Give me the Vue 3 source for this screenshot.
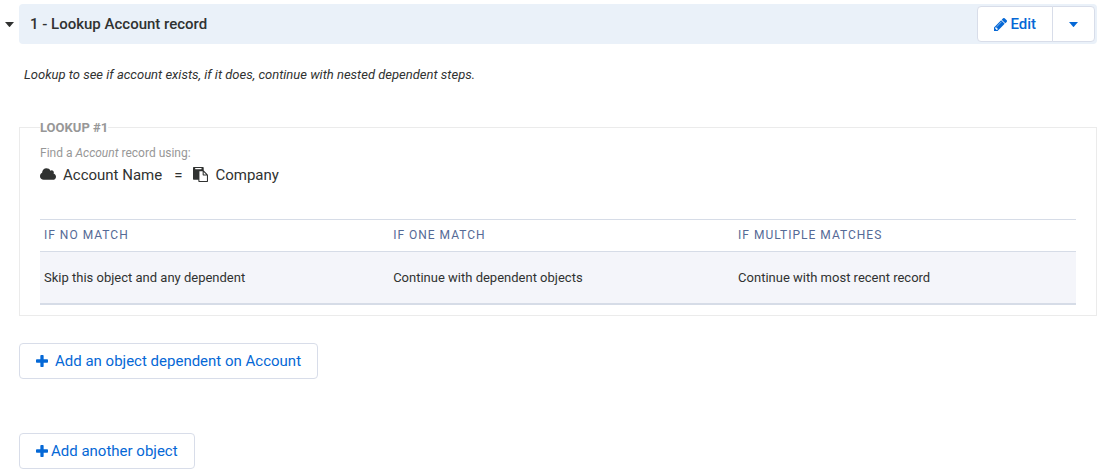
<script setup>
import { ref } from 'vue'

const open = ref(true)

const outcomes = [
  { when: 'If no match', action: 'Skip this object and any dependent' },
  { when: 'If one match', action: 'Continue with dependent objects' },
  { when: 'If multiple matches', action: 'Continue with most recent record' },
]

const plusPath =
  'M1600 736v192q0 40-28 68t-68 28h-416v416q0 40-28 68t-68 28h-192q-40 0-68-28t-28-68v-416h-416q-40 0-68-28t-28-68v-192q0-40 28-68t68-28h416v-416q0-40 28-68t68-28h192q40 0 68 28t28 68v416h416q40 0 68 28t28 68z'
</script>

<template>
  <main class="page">
    <section class="step">
      <header class="step-head">
        <button class="toggle" type="button" aria-label="Toggle step" :aria-expanded="open" @click="open = !open">
          <svg class="caret" viewBox="0 0 9 5" aria-hidden="true"><path d="M0 0h9L4.900 4.700q-.4.4-.8 0z" /></svg>
        </button>
        <div class="bar">
          <h2 class="title">1 - Lookup Account record</h2>
          <div class="group">
            <button class="btn edit" type="button">
              <svg class="pencil" viewBox="128 149 1515 1515" aria-hidden="true">
                <path d="M491 1536l91-91-235-235-91 91v107h128v128h107zm523-928q0-22-22-22-10 0-17 7l-542 542q-7 7-7 17 0 22 22 22 10 0 17-7l542-542q7-7 7-17zm-54-192l416 416-832 832h-416v-416zm683 96q0 53-37 90l-166 166-416-416 166-165q36-38 90-38 53 0 91 38l235 234q37 39 37 91z" />
              </svg>
              <span>Edit</span>
            </button>
            <button class="btn more" type="button" aria-label="More actions">
              <svg class="caret" viewBox="0 0 9 5" aria-hidden="true"><path d="M0 0h9L4.900 4.700q-.4.4-.8 0z" /></svg>
            </button>
          </div>
        </div>
      </header>

      <div v-show="open" class="body">
        <p class="note">Lookup to see if account exists, if it does, continue with nested dependent steps.</p>

        <fieldset class="lookup">
          <legend>LOOKUP #1</legend>
          <p class="hint">Find a <em>Account</em> record using:</p>
          <p class="rule">
            <svg class="cloud" viewBox="64 128 1920 1408" aria-hidden="true">
              <path d="M1984 1152q0 159-112.500 271.500t-271.500 112.500h-1088q-185 0-316.500-131.500t-131.500-316.500q0-132 71-241.500t187-163.500q-2-28-2-43 0-212 150-362t362-150q158 0 286.500 88t187.500 230q70-62 166-62 106 0 181 75t75 181q0 75-41 138 129 30 213 134.500t84 239.500z" />
            </svg>
            <span class="field">Account Name</span>
            <span class="equals">=</span>
            <svg class="paste" viewBox="0 0 1792 1792" aria-hidden="true">
              <path d="M768 1664h896v-640h-416q-40 0-68-28t-28-68v-416h-384v1152zm256-1440v-64q0-13-9.500-22.500t-22.500-9.500h-704q-13 0-22.500 9.500t-9.500 22.500v64q0 13 9.500 22.500t22.500 9.500h704q13 0 22.500-9.500t9.500-22.500zm256 672h299l-299-299v299zm512 128v672q0 40-28 68t-68 28h-960q-40 0-68-28t-28-68v-160h-544q-40 0-68-28t-28-68v-1344q0-40 28-68t68-28h1088q40 0 68 28t28 68v328q21 13 36 28l408 408q28 28 48 76t20 88z" />
            </svg>
            <span class="field">Company</span>
          </p>

          <table class="outcomes">
            <colgroup>
              <col class="col-none" />
              <col class="col-one" />
              <col class="col-many" />
            </colgroup>
            <thead>
              <tr>
                <th v-for="o in outcomes" :key="o.when" scope="col">{{ o.when }}</th>
              </tr>
            </thead>
            <tbody>
              <tr>
                <td v-for="o in outcomes" :key="o.when">{{ o.action }}</td>
              </tr>
            </tbody>
          </table>
        </fieldset>

        <button class="btn add wide" type="button">
          <svg class="plus" viewBox="192 128 1408 1408" aria-hidden="true"><path :d="plusPath" /></svg>
          <span>Add an object dependent on Account</span>
        </button>
      </div>
    </section>

    <button class="btn add outer" type="button">
      <svg class="plus" viewBox="192 128 1408 1408" aria-hidden="true"><path :d="plusPath" /></svg>
      <span>Add another object</span>
    </button>
  </main>
</template>

<style>
body {
  background: #fff;
}
</style>

<style scoped>
.page {
  padding: 4px 17px 4px 0;
  font-family: Roboto, "Liberation Sans", sans-serif;
  font-size: 13px;
  line-height: 20px;
  color: #303231;
}

.page svg {
  display: block;
  flex: none;
  fill: currentColor;
}

.step {
  margin-bottom: 54px;
}

.step-head {
  display: flex;
}

.toggle {
  display: flex;
  align-items: center;
  width: 19px;
  padding: 0 0 0 5px;
  border: 0;
  background: none;
  color: #303231;
}

.caret {
  width: 9px;
  height: 5px;
}

.bar {
  flex: 1;
  display: flex;
  align-items: center;
  justify-content: space-between;
  padding: 2px 2px 2px 11px;
  border-radius: 4px;
  background: #eaf1f9;
}

.title {
  margin: 0;
  font-size: 15px;
  font-weight: 500;
}

.group {
  display: flex;
}

.btn {
  display: flex;
  align-items: center;
  box-sizing: border-box;
  height: 36px;
  padding: 0 16px;
  border: 1px solid #d8dde9;
  border-radius: 4px;
  background: #fff;
  color: #0568d6;
  font-family: inherit;
  font-size: 15px;
  line-height: 20px;
}

.edit {
  gap: 3px;
  border-radius: 4px 0 0 4px;
  font-weight: 500;
}

.more {
  margin-left: -1px;
  border-radius: 0 4px 4px 0;
}

.pencil {
  width: 13px;
  height: 13px;
}

.body {
  padding-left: 19px;
}

.note {
  margin: 21px 5px 32px;
  font-size: 13px;
  font-style: italic;
}

.lookup {
  min-width: 0;
  margin: 0 0 27px;
  padding: 6px 20px 10px;
  border: 1px solid #ebebeb;
}

.lookup legend {
  padding: 2px 0 0;
  font-size: 13px;
  font-weight: 700;
  line-height: 18px;
  color: #979797;
}

.hint {
  margin: 0;
  font-size: 12px;
  color: #979797;
}

.rule {
  display: flex;
  align-items: center;
  margin: 2px 0 34px;
  font-size: 15px;
}

.rule svg {
  margin-bottom: 2px;
}

.cloud {
  width: 16px;
  height: 12px;
}

.paste {
  width: 15px;
  height: 15px;
}

.field {
  margin-left: 7px;
}

.equals {
  margin: 0 11px 0 12px;
}

.outcomes {
  width: 100%;
  border-collapse: collapse;
  table-layout: fixed;
}

.col-none {
  width: 33.7%;
}

.col-one {
  width: 33.3%;
}

.col-many {
  width: 33%;
}

.outcomes th {
  padding: 5px 4px 6px;
  border-top: 1px solid #d6dce7;
  border-bottom: 1px solid #d6dce7;
  font-size: 12px;
  font-weight: 400;
  letter-spacing: 1px;
  text-align: left;
  text-transform: uppercase;
  color: #556a96;
}

.outcomes td {
  padding: 16px 4px 15px;
  border-bottom: 2px solid #d6dce7;
  background: #f4f5fa;
  font-size: 13px;
}

.add {
  gap: 3px;
}

.add.wide {
  gap: 7px;
}

.outer {
  margin-left: 19px;
}

.plus {
  width: 12px;
  height: 12px;
}
</style>
